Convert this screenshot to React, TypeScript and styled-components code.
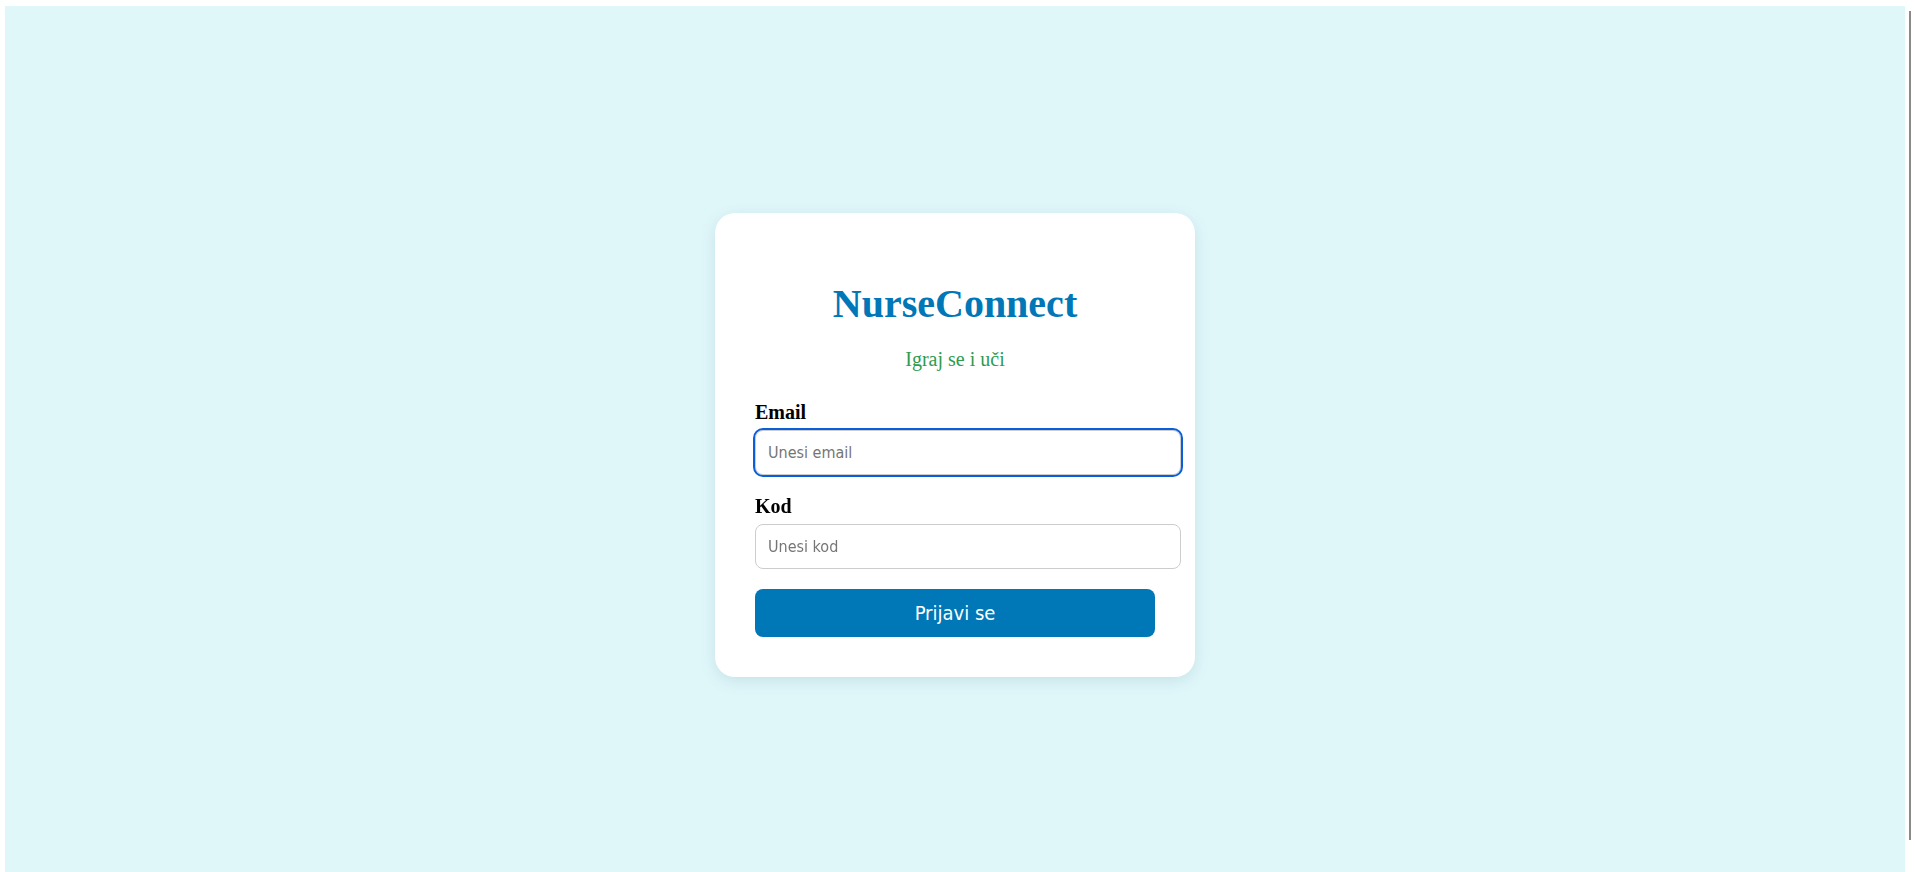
import React from "react";
import styled, { createGlobalStyle } from "styled-components";

const GlobalStyle = createGlobalStyle`
  html, body {
    margin: 0;
    padding: 0;
    overflow: hidden;
    background: #ffffff;
  }
  * { box-sizing: content-box; }
`;

const Frame = styled.div`
  padding: 6px 9px 0 5px;
`;

const Page = styled.main`
  min-height: calc(100vh + 6px);
  background: #e0f7fa;
  display: flex;
  align-items: center;
  justify-content: center;
  font-family: "Liberation Serif", "Times New Roman", serif;
`;

const Card = styled.section`
  width: 400px;
  padding: 40px;
  background: #ffffff;
  border-radius: 20px;
  box-shadow: 0 4px 16px rgba(0, 80, 100, 0.12);
`;

const Title = styled.h1`
  margin: 27px 0 21px;
  font-size: 40px;
  font-weight: 700;
  color: #0077b6;
  text-align: center;
`;

const Subtitle = styled.p`
  margin: 0 0 30px;
  font-size: 20px;
  color: #2e9b4f;
  text-align: center;
`;

const Field = styled.div`
  display: flex;
  flex-direction: column;
  margin-bottom: 20px;
`;

const Label = styled.label`
  display: block;
  margin-bottom: 6px;
  font-size: 20px;
  font-weight: 700;
  color: #000000;
`;

const Input = styled.input<{ $focused?: boolean }>`
  width: 400px;
  padding: 12px;
  font-family: "DejaVu Sans Condensed", "DejaVu Sans", sans-serif;
  font-stretch: condensed;
  font-size: 16px;
  line-height: 19px;
  height: 19px;
  border: 1px solid #cccccc;
  border-radius: 8px;
  color: #222;
  background: #fff;
  outline: ${(p) => (p.$focused ? "2px solid #0a5fd8" : "none")};
  outline-offset: 0;
  &::placeholder {
    color: #757575;
  }
  &:focus {
    outline: 2px solid #0a5fd8;
  }
`;

const Button = styled.button`
  display: block;
  width: 400px;
  padding: 12px 0;
  border: none;
  border-radius: 8px;
  background: #0077b6;
  color: #ffffff;
  font-family: "DejaVu Sans Condensed", "DejaVu Sans", sans-serif;
  font-stretch: condensed;
  font-size: 20px;
  line-height: 24px;
  cursor: pointer;
`;

const ScrollThumb = styled.div`
  position: fixed;
  top: 11px;
  left: 1909px;
  width: 2px;
  height: 829px;
  background: #8a8a8a;
`;

export default function App() {
  return (
    <>
      <GlobalStyle />
      <Frame>
        <Page>
          <Card>
            <Title>NurseConnect</Title>
            <Subtitle>Igraj se i uči</Subtitle>
            <Field>
              <Label htmlFor="email">Email</Label>
              <Input id="email" type="email" placeholder="Unesi email" $focused autoFocus />
            </Field>
            <Field>
              <Label htmlFor="kod">Kod</Label>
              <Input id="kod" type="password" placeholder="Unesi kod" />
            </Field>
            <Button type="button">Prijavi se</Button>
          </Card>
        </Page>
      </Frame>
      <ScrollThumb />
    </>
  );
}
